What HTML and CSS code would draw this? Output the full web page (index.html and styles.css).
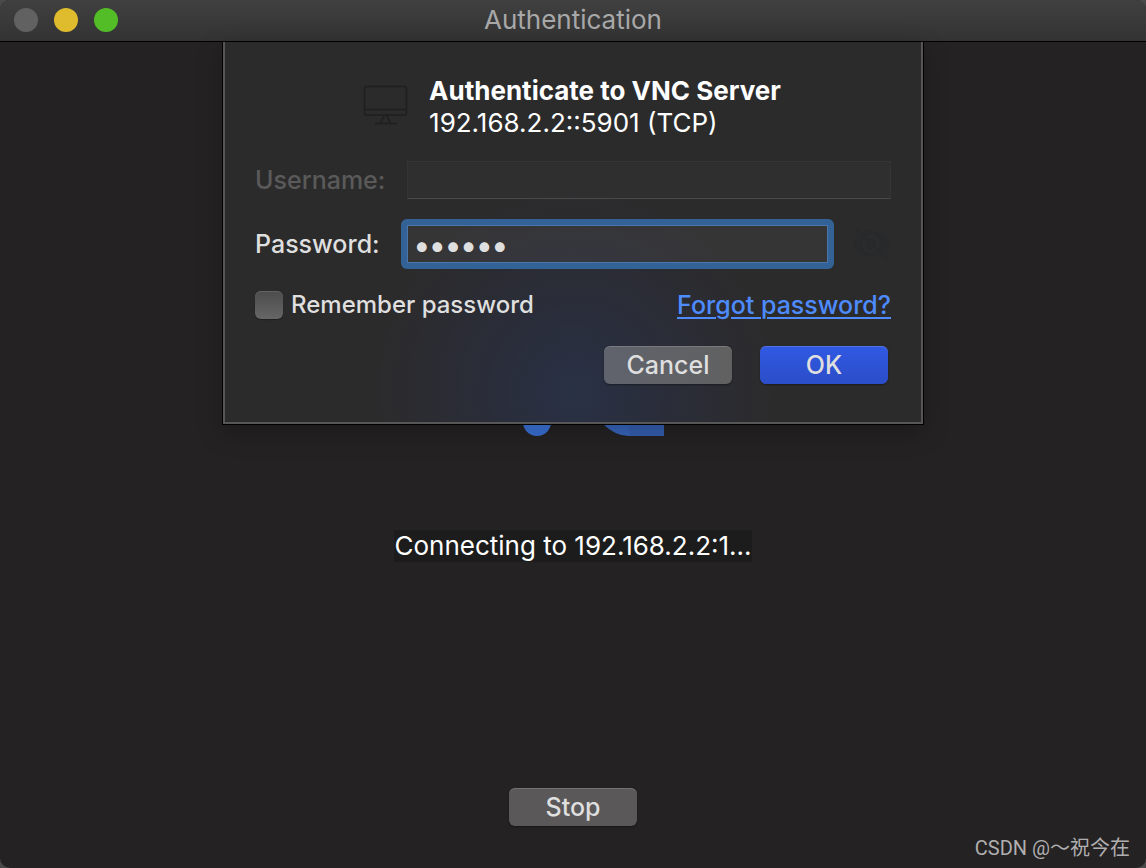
FILE: index.html
```html
<!DOCTYPE html>
<html lang="en">
<head>
<meta charset="utf-8">
<title>Authentication</title>
<link rel="stylesheet" href="styles.css">
</head>
<body>
<div class="window">
  <header class="titlebar">
    <div class="lights">
      <button class="light light-close" type="button" aria-label="Close"></button>
      <button class="light light-minimize" type="button" aria-label="Minimize"></button>
      <button class="light light-zoom" type="button" aria-label="Zoom"></button>
    </div>
    <h1 class="title">Authentication</h1>
  </header>

  <main class="content">
    <svg class="logo" width="140" height="140" viewBox="0 0 140 140" aria-hidden="true">
      <defs>
        <linearGradient id="dot" x1="0" y1="0" x2="0" y2="1">
          <stop offset="0" stop-color="#4488f4"/>
          <stop offset="1" stop-color="#376cd0"/>
        </linearGradient>
      </defs>
      <circle cx="34" cy="126" r="14" fill="url(#dot)"/>
      <path d="M126 140Q112 140 100 128V110H126Z" fill="#3765bc"/>
      <path d="M126 110H161V140H126Z" fill="#355fb2"/>
    </svg>
    <p class="status">Connecting to 192.168.2.2:1...</p>
    <button class="button stop" type="button">Stop</button>

    <form class="sheet">
      <div class="server">
        <svg class="monitor" width="46" height="40" viewBox="0 0 46 40" fill="none" stroke="#1f1f1f" stroke-width="1.6" aria-hidden="true">
          <rect x="1.5" y="1.5" width="42" height="28.5" rx="2"/>
          <path d="M2 24.5H43M21.500 30L17.500 38M23.500 30L27.500 38M12 38.500H34"/>
        </svg>
        <div class="server-text">
          <h2 class="server-name">Authenticate to VNC Server</h2>
          <p class="server-address">192.168.2.2::5901 (TCP)</p>
        </div>
      </div>

      <div class="row">
        <label class="label label-disabled" for="username">Username:</label>
        <input class="field" id="username" type="text" disabled>
      </div>

      <div class="row">
        <label class="label" for="password">Password:</label>
        <input class="field field-focus" id="password" type="password" value="secret">
        <button class="reveal" type="button" aria-label="Show password">
          <svg width="40" height="32" viewBox="0 0 40 32" aria-hidden="true">
            <path d="M1 16Q8 3 20 3T39 16Q32 29 20 29T1 16Z" fill="#28292a"/>
            <circle cx="20" cy="16" r="7.500" fill="none" stroke="#2d2c2d" stroke-width="3"/>
            <path d="M6 4L34 31" stroke="#2d2c2d" stroke-width="3"/>
            <path d="M4 1L36 31" stroke="#28292a" stroke-width="2.500"/>
          </svg>
        </button>
      </div>

      <div class="options">
        <label class="remember"><input class="checkbox" type="checkbox">Remember password</label>
        <a class="forgot" href="#">Forgot password?</a>
      </div>

      <div class="actions">
        <button class="button cancel" type="button">Cancel</button>
        <button class="button ok" type="submit">OK</button>
      </div>
    </form>
  </main>
  <p class="watermark">CSDN @～祝今在</p>
</div>
</body>
</html>
```

FILE: styles.css
```css
* {
  box-sizing: border-box;
}

body {
  margin: 0;
  background: #4a4a4a;
  font-family: Inter, "Liberation Sans", sans-serif;
  font-size: 25px;
  font-weight: 500;
  line-height: 32px;
  color: #dfdfdf;
}

h1, h2, p {
  margin: 0;
}

button, input {
  font: inherit;
  color: inherit;
}

.window {
  position: relative;
  display: flex;
  flex-direction: column;
  min-height: 100vh;
  background: #242223;
  border-radius: 10px;
  overflow: hidden;
}

.titlebar {
  display: grid;
  grid-template-columns: 1fr auto 1fr;
  align-items: center;
  height: 42px;
  padding: 0 14px 1px;
  background: linear-gradient(#404040, #333333);
  border-bottom: 1px solid #000;
}

.lights {
  display: flex;
  gap: 16px;
}

.light {
  width: 24px;
  height: 24px;
  padding: 0;
  border: 0;
  border-radius: 50%;
}

.light-close { background: #616161; }
.light-minimize { background: #dfbb2e; }
.light-zoom { background: #53bd28; }

.title {
  font-size: 26px;
  font-weight: 400;
  color: #a8a8a8;
}

.content {
  position: relative;
  flex: 1;
  display: flex;
  flex-direction: column;
  align-items: center;
  padding: 254px 0 42px;
}

.logo {
  overflow: visible;
}

.status {
  margin-top: 94px;
  background: #1c1c1c;
  font-size: 26px;
  font-weight: 400;
  color: #fff;
}

.button {
  width: 128px;
  height: 38px;
  padding: 0;
  border: 0;
  border-radius: 6px;
  box-shadow: inset 0 1px rgba(255, 255, 255, 0.16), 0 1px 2px rgba(0, 0, 0, 0.4);
}

.stop {
  margin-top: auto;
  background: #5a5859;
}

.sheet {
  position: absolute;
  top: 0;
  left: 50%;
  width: 700px;
  transform: translateX(-50%);
  display: flex;
  flex-direction: column;
  padding: 33px 30px 38px;
  border: 2px solid #565657;
  border-top: 0;
  background: radial-gradient(circle at 350px 350px, #293146 0, #2a2d39 90px, #2c2b2c 200px);
  box-shadow: 0 0 0 1px #000, 0 8px 24px rgba(0, 0, 0, 0.25);
}

.server {
  display: flex;
  justify-content: center;
  gap: 20px;
  padding-right: 2px;
}

.monitor {
  margin-top: 10px;
}

.server-name {
  font-size: 26px;
  font-weight: 700;
  color: #fff;
}

.server-address {
  font-size: 26px;
  font-weight: 400;
  color: #fff;
}

.row {
  display: flex;
  align-items: center;
  margin-top: 22px;
}

.row + .row {
  margin-top: 26px;
}

.label {
  width: 152px;
  font-size: 25px;
}

.label-disabled {
  color: #5a5a5a;
}

.field {
  flex: 1;
  min-width: 0;
  height: 38px;
  padding: 0 8px;
  background: rgba(255, 255, 255, 0.02);
  border: 1px solid #353535;
  border-bottom-color: #4a4a4a;
}

.field-focus {
  padding: 0 6px;
  background: rgba(255, 255, 255, 0.05);
  border-color: #4a76ac;
  border-radius: 0;
  outline: 0;
  box-shadow: 0 0 0 6px #336296;
  clip-path: inset(-6px round 6px);
  font-size: 31px;
  font-weight: 600;
}

.reveal {
  display: flex;
  margin-left: 23px;
  padding: 0;
  border: 0;
  background: none;
}

.options {
  display: flex;
  align-items: center;
  justify-content: space-between;
  margin-top: 26px;
}

.remember {
  display: flex;
  align-items: center;
  gap: 8px;
  font-size: 24px;
}

.checkbox {
  appearance: none;
  width: 28px;
  height: 28px;
  margin: 0;
  border-radius: 6px;
  background: linear-gradient(#4c4c4c, #666666);
  box-shadow: inset 0 1px #626262, 0 1px 1px rgba(0, 0, 0, 0.3);
}

.forgot {
  color: #4d8bff;
  text-decoration-thickness: 2px;
  text-underline-offset: 3px;
}

.actions {
  display: flex;
  justify-content: flex-end;
  gap: 28px;
  margin-top: 25px;
  padding-right: 3px;
}

.cancel {
  background: linear-gradient(90deg, #60636d, #616161);
}

.ok {
  background: linear-gradient(#3059e3, #2b4dc8);
}

.watermark {
  position: absolute;
  right: 16px;
  bottom: 4px;
  font-family: Roboto, "Noto Sans CJK SC", sans-serif;
  font-size: 20px;
  font-weight: 400;
  color: #b0afb0;
}
```
